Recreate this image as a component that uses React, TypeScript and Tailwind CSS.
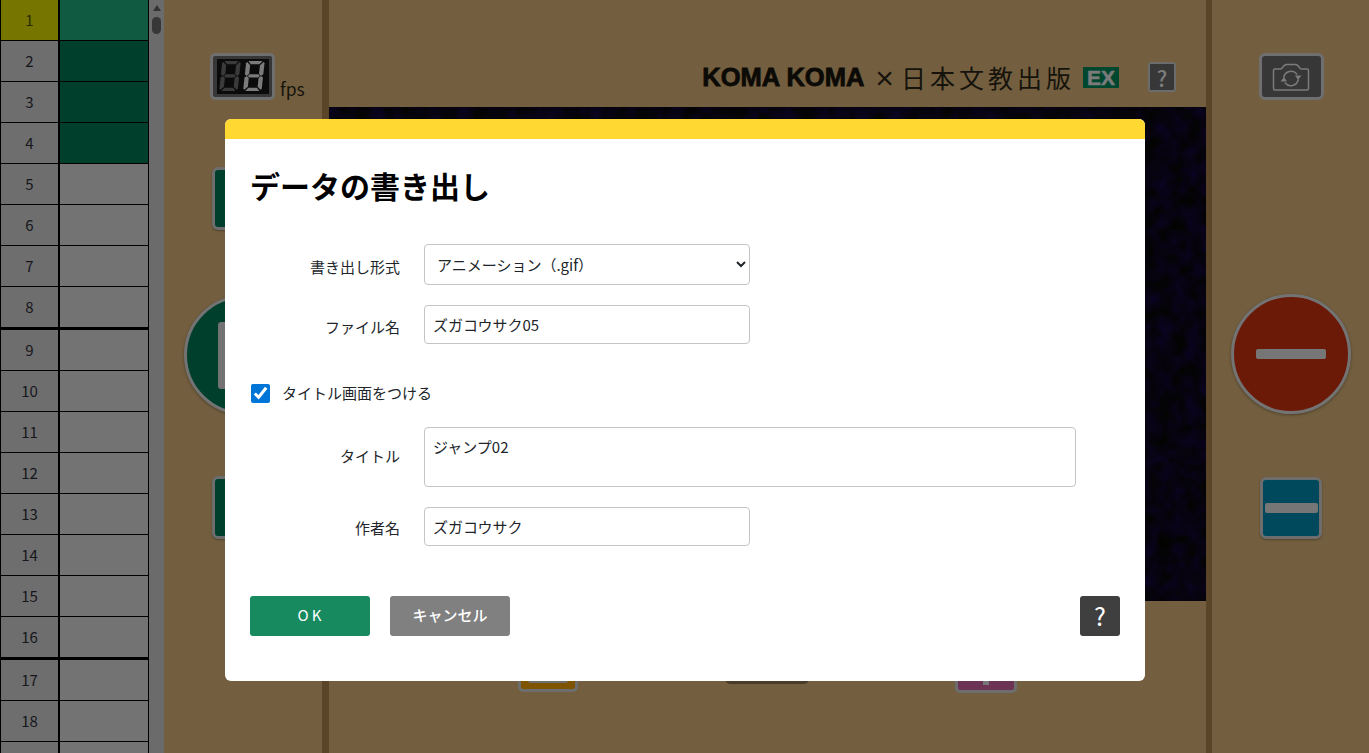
const JP = "font-['Noto_Sans_CJK_JP','Noto_Sans',sans-serif]"

const rows = Array.from({ length: 19 }, (_, i) => i + 1)

function Digit({ x, color }: { x: number; color: string }) {
  // 7 segment, all lit
  return (
    <g transform={`translate(${x} 0) skewX(-6)`} fill={color}>
      <path d="M4 0h13l-2.500 3H6.500z" />
      <path d="M3 1l3 3v8l-2 2-2-1.500V2z" />
      <path d="M18 1l-3 3v8l2 2 2-1.500V2z" />
      <path d="M5 14l1.500-1.500h8L16 14l-1.500 1.500h-8z" />
      <path d="M2 15.500L4 14l2 2v8l-3 3-1-1z" />
      <path d="M19 15.500L17 14l-2 2v8l3 3 1-1z" />
      <path d="M6.500 25h8l2.500 3H4z" />
    </g>
  )
}

function TimeTable() {
  return (
    <div className={`w-[149px] shrink-0 ${JP}`}>
      {rows.map((n) => {
        const thick = n === 8 || n === 16
        const cell =
          n === 1 ? 'bg-[#0f5a40]' : n <= 4 ? 'bg-[#003f2b]' : 'bg-[#737373]'
        return (
          <div
            key={n}
            className={`flex border-l border-black bg-black ${thick ? 'h-[43px] border-b-[3px]' : 'h-[41px] border-b'}`}
          >
            <div
              className={`flex w-[57px] items-center justify-center pt-px text-[15px] ${n === 1 ? 'bg-[#757500] text-[#2b2b00]' : 'bg-[#6e6e6e] text-[#16161c]'}`}
            >
              {n < 19 ? n : ''}
            </div>
            <div className={`ml-[2px] w-[88px] ${cell}`} />
            <div className="w-px bg-black" />
          </div>
        )
      })}
    </div>
  )
}

function Scrollbar() {
  return (
    <div className="flex w-[15px] shrink-0 flex-col items-center bg-[#6b6b6b] pt-[5px]">
      <div className="h-0 w-0 border-x-[4px] border-b-[6px] border-x-transparent border-b-[#333333]" />
      <div className="mt-[6px] h-[17px] w-[9px] rounded-full bg-[#373737]" />
    </div>
  )
}

function SquareButton({ color, className, children }: { color: string; className: string; children?: React.ReactNode }) {
  return (
    <div
      className={`flex items-center justify-center rounded-[6px] border-[3px] border-[#6d6d6d] shadow-[0_1px_2px_rgba(0,0,0,0.3)] ${color} ${className}`}
    >
      {children}
    </div>
  )
}

function LeftPanel() {
  return (
    <div className="flex w-[158px] shrink-0 flex-col items-start bg-[#735f3f] pt-[53px]">
      <div className="ml-[46px] flex items-end gap-[5px]">
        <div className="flex h-[47px] w-[65px] items-center justify-center rounded-[5px] border-[3px] border-[#6f6f6f] bg-[#373737]">
          <div className="flex h-[35px] w-[52px] items-center justify-center bg-[#0b0b0b]">
            <svg width="50" height="31" viewBox="0 0 46 29" preserveAspectRatio="none">
              <Digit x={2} color="#3a3a3a" />
              <Digit x={24} color="#7b7b7b" />
            </svg>
          </div>
        </div>
        <span className={`pb-[3px] text-[17.500px] leading-none text-[#16130c] ${JP}`}>fps</span>
      </div>
      <SquareButton color="bg-[#003f2b]" className="ml-[48px] mt-[67px] h-[63px] w-[63px]" />
      <div className="ml-[20px] mt-[65px] flex h-[120px] w-[120px] items-center justify-center rounded-full border-[3px] border-[#737373] bg-[#003f2b] shadow-[0_1px_3px_rgba(0,0,0,0.35)]">
        <div className="ml-[-32px] h-[67px] w-[20px] rounded-[3px] bg-[#737373]" />
      </div>
      <SquareButton color="bg-[#003f2b]" className="ml-[48px] mt-[61px] h-[63px] w-[63px]" />
    </div>
  )
}

function Logo() {
  return (
    <div className="flex items-center pt-px">
      <span className="font-['Liberation_Sans',sans-serif] text-[25.500px] leading-none font-bold text-[#0c0a06] [-webkit-text-stroke:0.8px_#0c0a06]">
        KOMA KOMA
      </span>
      <span className="ml-[11px] font-['Liberation_Sans',sans-serif] text-[32px] leading-none font-normal text-[#16130c]">×</span>
      <span className={`ml-[7px] text-[25px] leading-none tracking-[4px] text-[#16130c] ${JP}`}>日本文教出版</span>
      <span className="ml-[8px] flex h-[21px] w-[36px] items-center justify-center bg-[#00472f] font-['Liberation_Sans',sans-serif] text-[21px] leading-none font-bold text-[#7b7b7b] [-webkit-text-stroke:0.5px_#7b7b7b]">
        EX
      </span>
    </div>
  )
}

function Noise() {
  // 背景のカメラ映像（暗いノイズ）
  return (
    <svg className="block h-[494px] w-full" aria-hidden="true">
      <filter id="noise" colorInterpolationFilters="sRGB">
        <feTurbulence type="fractalNoise" baseFrequency="0.07" numOctaves="2" seed="4" />
        <feColorMatrix values="0.05 0 0 0 0  0 0 0 0 0.01  0.2 0 0 0 -0.04  0 0 0 0 1" />
      </filter>
      <rect width="100%" height="100%" filter="url(#noise)" />
    </svg>
  )
}

function CenterPanel() {
  return (
    <div className="flex min-w-0 flex-1 flex-col bg-[#735f3f]">
      <div className="flex h-[107px] items-start justify-end pt-[62px] pr-[30px]">
        <div className="flex h-[30px] items-center">
          <Logo />
        </div>
        <div className={`ml-[29px] flex h-[30px] w-[28px] items-center justify-center rounded-[3px] border-2 border-[#6c6c6c] bg-[#373737] text-[22px] leading-none font-medium text-[#7c7c7c] ${JP}`}>
          ?
        </div>
      </div>
      <Noise />
      <div className="flex items-start">
        <div className="ml-[189px] flex h-[91px] w-[60px] justify-center rounded-[5px] border-[3px] border-[#6d6d6d] bg-[#7f5400]">
          <div className="h-[79px] w-[40px] rounded-b-[3px] bg-[#6f6f6f]" />
        </div>
        <div className="ml-[147px] h-[83px] w-[84px] rounded-[5px] bg-[#4a3c28]" />
        <div className="ml-[146px] flex h-[92px] w-[62px] justify-center rounded-[5px] border-[3px] border-[#6d6d6d] bg-[#6d3355]">
          <div className="h-[81px] w-[6px] bg-[#767676]" />
        </div>
      </div>
    </div>
  )
}

function RightPanel() {
  return (
    <div className="flex w-[157px] shrink-0 flex-col items-center bg-[#735f3f] pt-[53px] pl-px">
      <div className="flex h-[47px] w-[65px] items-center justify-center rounded-[6px] border-[3px] border-[#6f6f6f] bg-[#373737]">
        <svg width="42" height="34" viewBox="0 0 42 34" fill="none" stroke="#7b7b7b" strokeWidth="1.500" strokeLinecap="round" strokeLinejoin="round">
          <path d="M3.500 10.500c0-1 .7-1.500 1.500-1.500h5.500c1 0 1.500-.5 2-1.300 1.200-2.200 2.500-3.200 4-3.200h9c1.500 0 2.800 1 4 3.200.5.800 1 1.300 2 1.300h5.500c.8 0 1.500.5 1.500 1.500v18c0 .9-.7 1.500-1.500 1.500H5c-.8 0-1.500-.6-1.500-1.500z" />
          <path d="M13.800 17a7.500 7.500 0 0 1 13-3" />
          <path d="M28.200 20a7.500 7.500 0 0 1-13 3" />
          <path d="M25 15.500h6.500L28 20z" fill="#7b7b7b" stroke="none" />
          <path d="M17 21.500h-6.500L14 17z" fill="#7b7b7b" stroke="none" />
        </svg>
      </div>
      <div className="mt-[194px] flex h-[120px] w-[120px] items-center justify-center rounded-full border-[3px] border-[#737373] bg-[#6c1a08] shadow-[0_1px_3px_rgba(0,0,0,0.35)]">
        <div className="h-[10px] w-[70px] rounded-[2px] bg-[#767676]" />
      </div>
      <SquareButton color="bg-[#00485b]" className="mt-[63px] h-[62px] w-[62px]">
        <div className="h-[10px] w-[53px] shrink-0 rounded-[2px] bg-[#767676]" />
      </SquareButton>
    </div>
  )
}

function Field({ label, low = true, children }: { label: string; low?: boolean; children: React.ReactNode }) {
  return (
    <div className="flex items-center">
      <label className={`w-[174px] shrink-0 pr-[24px] text-right text-[15px] text-[#212529] ${low ? 'pt-[5px]' : ''}`}>{label}</label>
      {children}
    </div>
  )
}

function ExportDialog() {
  const inputCls =
    'block h-[39px] w-[326px] rounded-[4px] border border-[#c4c4c4] bg-white px-[8px] text-[15px] text-[#212529] outline-none'
  return (
    <div className={`absolute top-[119px] left-[225px] h-[562px] w-[920px] overflow-hidden rounded-[6px] bg-white ${JP}`}>
      <div className="h-5 bg-[#ffd832]" />
      <div className="px-[25px]">
        <h1 className="mt-[23px] text-[30px] leading-[46px] font-bold text-black">データの書き出し</h1>
        <div className="mt-[36px] flex flex-col gap-5">
          <Field label="書き出し形式">
            <select
              defaultValue="gif"
              className="block h-[41px] w-[326px] rounded-[4px] border border-[#c4c4c4] bg-white px-[8px] text-[15px] text-[#212529] outline-none"
            >
              <option value="gif">アニメーション（.gif）</option>
              <option value="mp4">動画（.mp4）</option>
            </select>
          </Field>
          <Field label="ファイル名">
            <input className={inputCls} defaultValue="ズガコウサク05" />
          </Field>
        </div>
        <label className="mt-[38px] ml-px flex items-center gap-[12px] text-[15px] text-[#212529]">
          <input type="checkbox" defaultChecked className="h-[19px] w-[19px] accent-[#0075d8]" />
          タイトル画面をつける
        </label>
        <div className="mt-[22px] flex flex-col gap-5">
          <Field label="タイトル" low={false}>
            <textarea
              className="block h-[60px] w-[652px] resize-none rounded-[4px] border border-[#c4c4c4] bg-white px-[8px] py-[8px] text-[15px] leading-[21px] text-[#212529] outline-none"
              defaultValue="ジャンプ02"
            />
          </Field>
          <Field label="作者名">
            <input className={inputCls} defaultValue="ズガコウサク" />
          </Field>
        </div>
        <div className="mt-[50px] flex gap-5">
          <button className="h-10 w-[120px] rounded-[3px] bg-[#178a60] pl-[2px] text-[15px] tracking-[0.2em] text-white">OK</button>
          <button className="h-10 w-[120px] rounded-[3px] bg-[#808080] text-[15px] font-medium text-white">キャンセル</button>
          <button className="ml-auto h-10 w-10 rounded-[3px] bg-[#3f3f3f] text-[25px] leading-none text-white">?</button>
        </div>
      </div>
    </div>
  )
}

export default function App() {
  return (
    <div className="relative flex h-[753px] w-[1369px] overflow-hidden bg-[#735f3f]">
      <TimeTable />
      <Scrollbar />
      <LeftPanel />
      <div className="w-[7px] shrink-0 bg-[#5a4529]" />
      <CenterPanel />
      <div className="w-[6px] shrink-0 bg-[#5a4529]" />
      <RightPanel />
      <ExportDialog />
    </div>
  )
}
